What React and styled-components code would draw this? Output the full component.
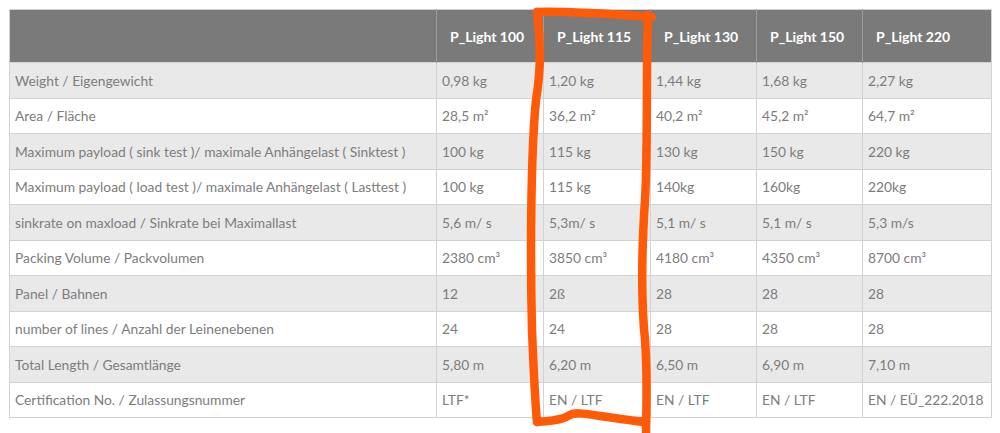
import React from "react";
import styled, { createGlobalStyle } from "styled-components";

const models = ["P_Light 100", "P_Light 115", "P_Light 130", "P_Light 150", "P_Light 220"];

const rows = [
  ["Weight / Eigengewicht", "0,98 kg", "1,20 kg", "1,44 kg", "1,68 kg", "2,27 kg"],
  ["Area / Fläche", "28,5 m²", "36,2 m²", "40,2 m²", "45,2 m²", "64,7 m²"],
  ["Maximum payload ( sink test )/ maximale Anhängelast ( Sinktest )", "100 kg", "115 kg", "130 kg", "150 kg", "220 kg"],
  ["Maximum payload ( load test )/ maximale Anhängelast ( Lasttest )", "100 kg", "115 kg", "140kg", "160kg", "220kg"],
  ["sinkrate on maxload / Sinkrate bei Maximallast", "5,6 m/ s", "5,3m/ s", "5,1 m/ s", "5,1 m/ s", "5,3 m/s"],
  ["Packing Volume / Packvolumen", "2380 cm³", "3850 cm³", "4180 cm³", "4350 cm³", "8700 cm³"],
  ["Panel / Bahnen", "12", "2ß", "28", "28", "28"],
  ["number of lines / Anzahl der Leinenebenen", "24", "24", "28", "28", "28"],
  ["Total Length / Gesamtlänge", "5,80 m", "6,20 m", "6,50 m", "6,90 m", "7,10 m"],
  ["Certification No. / Zulassungsnummer", "LTF*", "EN / LTF", "EN / LTF", "EN / LTF", "EN / EÜ_222.2018"],
];

const widths = [427, 107, 107, 106, 106, 129];

const Global = createGlobalStyle`
  body {
    margin: 0;
    background: #fff;
    font-family: Lato, "Open Sans", sans-serif;
  }
`;

const Page = styled.div`
  position: relative;
  width: 1000px;
  height: 433px;
  padding: 9px;
  box-sizing: border-box;
  overflow: hidden;
`;

const Table = styled.table`
  width: 982px;
  table-layout: fixed;
  border-collapse: collapse;
  border: 1px solid #d2d2d2;
`;

const HeadRow = styled.tr`
  height: 53px;
  background: #7a7a7a;
`;

const HeadCell = styled.th`
  padding: 0 13px;
  text-align: left;
  color: #fff;
  font-weight: 700;
  font-size: 14px;
  border-left: 1px solid #9c9c9c;
  white-space: nowrap;
  &:first-child {
    border-left: none;
  }
`;

const Row = styled.tr`
  height: 35.5px;
  background: ${(p) => (p.$striped ? "#e9e9e9" : "#fff")};
`;

const Cell = styled.td`
  padding: 0 5px;
  color: #7d7d7d;
  font-size: 13.8px;
  border: 1px solid #d2d2d2;
  white-space: nowrap;
  overflow: hidden;
`;

const Scribble = styled.svg`
  position: absolute;
  left: 0;
  top: 0;
  pointer-events: none;
`;

const Marker = () => (
  <Scribble width="1000" height="433" viewBox="0 0 1000 433">
    <g fill="none" stroke="#ff5a08" strokeWidth="8.5" strokeLinecap="round" strokeLinejoin="round">
      <path d="M537,12 C570,11 610,14 652,17" />
      <path d="M648,15 C646,60 648,150 645,200 C641,260 641,300 645,340 C648,380 646,410 646,438" />
      <path d="M537,12 C541,40 541,70 536,100 C531,150 530,250 532,330 C534,380 535,400 537,422" />
      <path d="M537,422 C550,421 562,420 568,416 C574,412 582,413 600,416 C620,419 635,421 646,422" />
    </g>
  </Scribble>
);

export default function App() {
  return (
    <Page>
      <Global />
      <Table>
        <colgroup>
          {widths.map((w, i) => (
            <col key={i} style={{ width: w }} />
          ))}
        </colgroup>
        <thead>
          <HeadRow>
            <HeadCell />
            {models.map((m) => (
              <HeadCell key={m}>{m}</HeadCell>
            ))}
          </HeadRow>
        </thead>
        <tbody>
          {rows.map((r, i) => (
            <Row key={i} $striped={i % 2 === 0}>
              {r.map((c, j) => (
                <Cell key={j}>{c}</Cell>
              ))}
            </Row>
          ))}
        </tbody>
      </Table>
      <Marker />
    </Page>
  );
}
